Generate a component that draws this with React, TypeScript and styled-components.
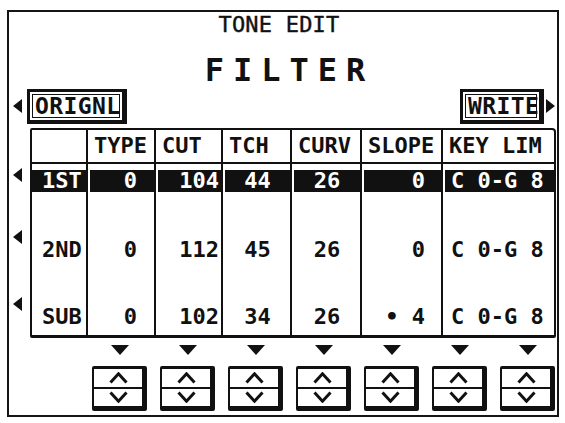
import React from "react";
import styled, { createGlobalStyle } from "styled-components";

const Global = createGlobalStyle`
  html, body { margin: 0; padding: 0; background: #fff; }
  body {
    width: 565px; height: 423px; overflow: hidden;
    font-family: "DejaVu Sans Mono", "Liberation Mono", monospace;
    color: #111;
  }
  * { box-sizing: border-box; }
`;

const Page = styled.div`
  width: 565px;
  height: 423px;
  padding: 10px 6px 6px 7px;
`;

const Frame = styled.div`
  width: 552px;
  height: 407px;
  border: 2px solid #151515;
  display: flex;
  flex-direction: column;
`;

const Title = styled.div`
  padding-top: 2px;
  padding-right: 8px;
  height: 24px;
  font-size: 22px;
  line-height: 22px;
  text-align: center;
  letter-spacing: 0.2px;
  -webkit-text-stroke: 0.4px #111;
`;

const Heading = styled.div`
  margin-top: 18px;
  font-size: 32px;
  line-height: 32px;
  font-weight: bold;
  text-align: center;
  letter-spacing: 9px;
  padding-left: 13px;
`;

const ActionRow = styled.div`
  margin-top: 2px;
  height: 36px;
  display: flex;
  align-items: center;
  padding: 0 2px 0 4px;
`;

const SoftKey = styled.div<{ $w: number }>`
  width: ${(p) => p.$w}px;
  height: 35px;
  border: 3px solid #111;
  border-right-width: 5px;
  border-bottom-width: 4px;
  box-shadow: inset 0 0 0 2px #fff, inset 0 0 0 3px #111;
  font-size: 23px;
  font-weight: bold;
  line-height: 28px;
  padding-left: 5px;
  letter-spacing: 0.4px;
`;

const Push = styled.div`
  flex: 1;
`;

const Arrow = styled.svg<{ $top?: number; $gap?: number }>`
  display: block;
  flex: none;
  margin-top: ${(p) => p.$top ?? 0}px;
  margin-right: ${(p) => p.$gap ?? 0}px;
  margin-left: ${(p) => (p.$gap === undefined ? 2 : 0)}px;
`;

const TableArea = styled.div`
  margin-top: 4px;
  display: flex;
`;

const Gutter = styled.div`
  width: 21px;
  padding-left: 4px;
  display: flex;
  flex-direction: column;
`;

const Table = styled.div`
  width: 526px;
  border: 2px solid #111;
  border-bottom-width: 3px;
  border-radius: 2px 4px 2px 2px;
`;

const COLS = "54px 68px 67px 69px 70px 81px 113px";

const HeadRow = styled.div`
  display: grid;
  grid-template-columns: ${COLS};
  border-bottom: 2px solid #111;
`;

const HeadCell = styled.div<{ $first: boolean }>`
  height: 32px;
  line-height: 32px;
  font-size: 22px;
  font-weight: bold;
  padding-left: 6px;
  border-left: ${(p) => (p.$first ? "none" : "2px solid #111")};
  white-space: pre;
`;

const DataRow = styled.div`
  display: grid;
  grid-template-columns: ${COLS};
`;

const DataCell = styled.div<{ $first: boolean; $after: number }>`
  padding-top: 6px;
  padding-bottom: ${(p) => p.$after}px;
  border-left: ${(p) => (p.$first ? "none" : "2px solid #111")};
`;

const Band = styled.div<{
  $sel: boolean;
  $first: boolean;
  $align: "left" | "right" | "center";
  $pad: number;
}>`
  height: 22px;
  line-height: 22px;
  font-size: 22px;
  font-weight: bold;
  white-space: pre;
  margin-left: ${(p) => (p.$first ? 0 : 2)}px;
  background: ${(p) => (p.$sel ? "#111" : "transparent")};
  color: ${(p) => (p.$sel ? "#fff" : "#111")};
  text-align: ${(p) => p.$align};
  padding-left: ${(p) => (p.$align === "left" ? p.$pad : 0)}px;
  padding-right: ${(p) => (p.$align === "right" ? p.$pad : 0)}px;
`;

const Controls = styled.div`
  margin-top: 7px;
  padding-left: 83px;
  display: flex;
  gap: 13px;
`;

const Control = styled.div`
  width: 55px;
  display: flex;
  flex-direction: column;
  align-items: center;
  gap: 11px;
`;

const Knob = styled.div`
  width: 55px;
  height: 45px;
  border-style: solid;
  border-color: #111;
  border-width: 3px 5px 5px 2px;
  border-radius: 2px;
  display: flex;
  flex-direction: column;
`;

const Half = styled.div`
  flex: 1;
  display: flex;
  align-items: center;
  justify-content: center;
`;

const Divider = styled.div`
  height: 2px;
  background: #111;
`;

type Align = "left" | "right" | "center";
const columns: { head: string; align: Align; pad: number }[] = [
  { head: "", align: "left", pad: 10 },
  { head: "TYPE", align: "right", pad: 17 },
  { head: "CUT", align: "right", pad: 2 },
  { head: "TCH", align: "center", pad: 0 },
  { head: "CURV", align: "center", pad: 0 },
  { head: "SLOPE", align: "right", pad: 16 },
  { head: "KEY LIM", align: "left", pad: 6 },
];

const rows = [
  { cells: ["1ST", "0", "104", "44", "26", "0", "C 0-G 8"], sel: true, after: 41 },
  { cells: ["2ND", "0", "112", "45", "26", "0", "C 0-G 8"], sel: false, after: 39 },
  { cells: ["SUB", "0", "102", "34", "26", "\u2022 4", "C 0-G 8"], sel: false, after: 7 },
];

const LeftTri = ({ top, gap }: { top?: number; gap?: number }) => (
  <Arrow $top={top} $gap={gap ?? 0} width="9" height="14" viewBox="0 0 9 14">
    <polygon points="9,0 9,14 0,7" fill="#111" />
  </Arrow>
);

const RightTri = () => (
  <Arrow width="9" height="14" viewBox="0 0 9 14">
    <polygon points="0,0 0,14 9,7" fill="#111" />
  </Arrow>
);

const DownTri = () => (
  <svg width="18" height="10" viewBox="0 0 18 10" style={{ display: "block" }}>
    <polygon points="0,0 18,0 9,10" fill="#111" />
  </svg>
);

const Chevron = ({ up }: { up: boolean }) => (
  <svg width="19" height="12" viewBox="0 0 19 12" style={{ display: "block" }}>
    <polyline
      points={up ? "1.5,10.5 9.5,1.8 17.5,10.5" : "1.5,1.5 9.5,10.2 17.5,1.5"}
      fill="none"
      stroke="#111"
      strokeWidth="3"
    />
  </svg>
);

export default function App() {
  return (
    <>
      <Global />
      <Page>
        <Frame>
          <Title>TONE EDIT</Title>
          <Heading>FILTER</Heading>
          <ActionRow>
            <LeftTri gap={5} />
            <SoftKey $w={100}>ORIGNL</SoftKey>
            <Push />
            <SoftKey $w={84}>WRITE</SoftKey>
            <RightTri />
          </ActionRow>
          <TableArea>
            <Gutter>
              <LeftTri top={40} />
              <LeftTri top={48} />
              <LeftTri top={53} />
            </Gutter>
            <Table>
              <HeadRow>
                {columns.map((c, i) => (
                  <HeadCell key={i} $first={i === 0}>
                    {c.head}
                  </HeadCell>
                ))}
              </HeadRow>
              {rows.map((r, ri) => (
                <DataRow key={ri}>
                  {r.cells.map((v, ci) => (
                    <DataCell key={ci} $first={ci === 0} $after={r.after}>
                      <Band
                        $sel={r.sel}
                        $first={ci === 0}
                        $align={columns[ci].align}
                        $pad={columns[ci].pad}
                      >
                        {v}
                      </Band>
                    </DataCell>
                  ))}
                </DataRow>
              ))}
            </Table>
          </TableArea>
          <Controls>
            {Array.from({ length: 7 }).map((_, i) => (
              <Control key={i}>
                <DownTri />
                <Knob>
                  <Half>
                    <Chevron up />
                  </Half>
                  <Divider />
                  <Half>
                    <Chevron up={false} />
                  </Half>
                </Knob>
              </Control>
            ))}
          </Controls>
        </Frame>
      </Page>
    </>
  );
}
